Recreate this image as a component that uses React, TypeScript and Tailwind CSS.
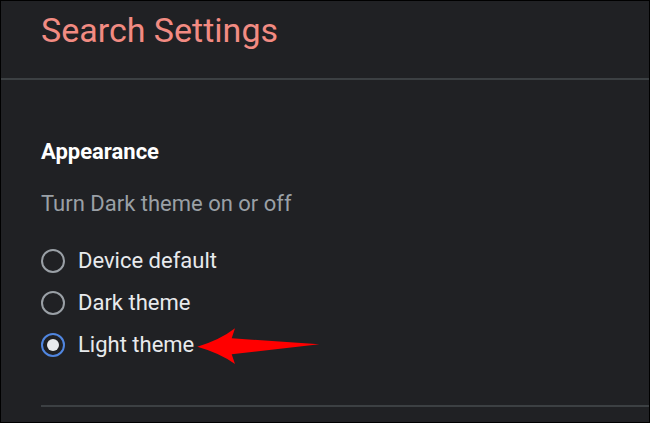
import { useState } from 'react'

const OPTIONS = ['Device default', 'Dark theme', 'Light theme']

export default function App() {
  const [theme, setTheme] = useState('Light theme')

  return (
    <div className="relative h-[423px] w-[650px] overflow-hidden border border-black bg-[#202124] font-['Roboto',sans-serif]">
      {/* header */}
      <div className="h-[77px] pl-[40px] pt-[9px]">
        <h1 className="text-[34px] font-normal leading-[40px] text-[#f28b82]">Search Settings</h1>
      </div>
      <div className="h-[2px] bg-[#3c4043]" />

      {/* appearance section */}
      <div className="px-[40px] pt-[58px]">
        <h2 className="text-[22px] font-bold leading-[28px] text-white">Appearance</h2>
        <p className="mt-[24px] text-[22px] leading-[28px] text-[#9aa0a6]">Turn Dark theme on or off</p>
        <div className="mt-[22px] flex flex-col">
          {OPTIONS.map((o) => {
            const active = o === theme
            return (
              <button
                key={o}
                onClick={() => setTheme(o)}
                className="flex h-[42px] items-center gap-[13px] text-left"
              >
                <span
                  className={
                    active
                      ? 'grid h-6 w-6 shrink-0 place-items-center rounded-full border-2 border-[#5086e0]'
                      : 'grid h-6 w-6 shrink-0 place-items-center rounded-full border-2 border-[#9aa0a6]'
                  }
                >
                  {active && <span className="h-3 w-3 rounded-full bg-[#e8eaed]" />}
                </span>
                <span className="text-[22px] leading-[28px] text-[#e8eaed]">{o}</span>
              </button>
            )
          })}
        </div>
      </div>
      <div className="ml-[40px] mt-[39px] h-[2px] bg-[#3c4043]" />

      {/* red callout arrow */}
      <svg className="absolute left-[195px] top-[326px]" width="126" height="40" viewBox="0 0 126 40">
        <path
          d="M1.3 19.7 Q24 13 39 1.3 L35.7 11.3 L123.3 17.3 L35.7 27.3 L39 37 Q24 26 1.3 19.7 Z"
          fill="#ff0000"
        />
      </svg>
    </div>
  )
}
